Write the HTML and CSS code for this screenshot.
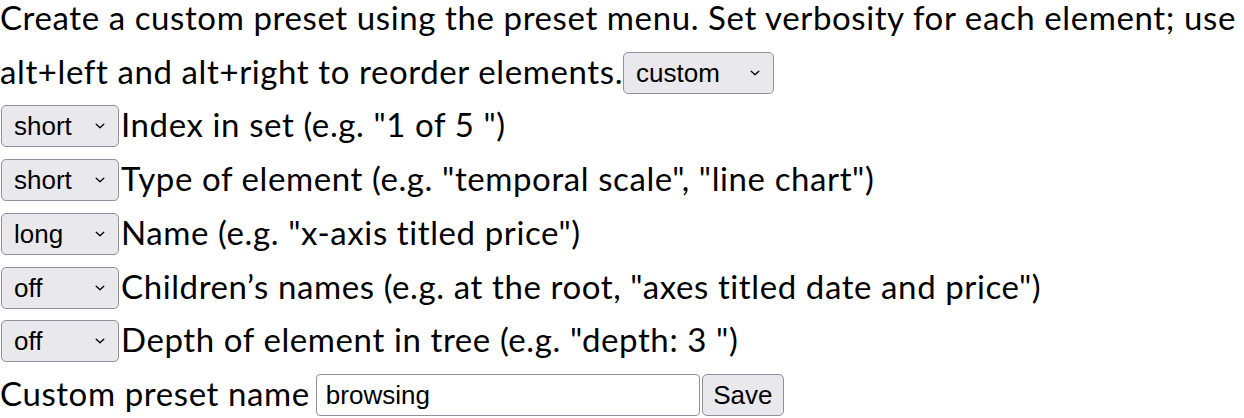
FILE: index.html
```html
<!DOCTYPE html>
<html>
<head>
<meta charset="utf-8">
<link rel="stylesheet" href="styles.css">
</head>
<body>
<div class="page">
  <p class="intro">Create a custom preset using the preset menu. Set verbosity for each element; use alt+left and alt+right to reorder elements.<select class="sel sel-preset"><option>custom</option></select></p>
  <div class="row"><select class="sel"><option>short</option></select><span class="label">Index in set (e.g. "1 of 5 ")</span></div>
  <div class="row"><select class="sel"><option>short</option></select><span class="label">Type of element (e.g. "temporal scale", "line chart")</span></div>
  <div class="row"><select class="sel"><option>long</option></select><span class="label">Name (e.g. "x-axis titled price")</span></div>
  <div class="row"><select class="sel"><option>off</option></select><span class="label">Children’s names (e.g. at the root, "axes titled date and price")</span></div>
  <div class="row"><select class="sel"><option>off</option></select><span class="label">Depth of element in tree (e.g. "depth: 3 ")</span></div>
  <div class="row"><label class="label" for="pname">Custom preset name</label><input id="pname" class="name" type="text" value="browsing"><button class="save">Save</button></div>
</div>
</body>
</html>
```
FILE: styles.css
```css
html, body {
  margin: 0;
  padding: 0;
  background: #ffffff;
}
.page {
  font-family: Lato, "Open Sans", sans-serif;
  font-size: 33px;
  letter-spacing: 0.6px;
  line-height: 53.7px;
  color: #000;
  margin-top: -9px;
}
.intro {
  margin: 0;
}
.row {
  margin: 0;
  white-space: nowrap;
}
.sel,
.name,
.save {
  font-family: "Liberation Sans", Arial, sans-serif;
  font-size: 26px;
  letter-spacing: 0;
  line-height: normal;
  color: #000;
  height: 42px;
  box-sizing: border-box;
  border: 1.5px solid #8f8f9d;
  margin: 0;
  vertical-align: 2px;
}
.sel {
  -webkit-appearance: none;
  appearance: none;
  width: 118px;
  padding: 0 0 0 12px;
  border-radius: 5px;
  background-color: #e9e9ed;
  background-image: url("data:image/svg+xml,%3Csvg xmlns='http://www.w3.org/2000/svg' width='10' height='6' viewBox='0 0 10 6'%3E%3Cpath d='M1.2 1.2l3.8 3.6 3.8-3.6' fill='none' stroke='%23000' stroke-width='1.3' stroke-linecap='round' stroke-linejoin='round'/%3E%3C/svg%3E");
  background-repeat: no-repeat;
  background-position: right 13px center;
}
.sel-preset {
  width: 151px;
  margin-left: 0;
}
.row .sel {
  margin-left: 1px;
  margin-right: 2px;
}
.name {
  width: 384px;
  border-radius: 4px;
  padding: 0 9px;
  margin-left: 6px;
  background: #fff;
}
.save {
  width: 82px;
  border-radius: 5px;
  background: #e9e9ed;
  padding: 0;
  margin-left: 2px;
}
```
